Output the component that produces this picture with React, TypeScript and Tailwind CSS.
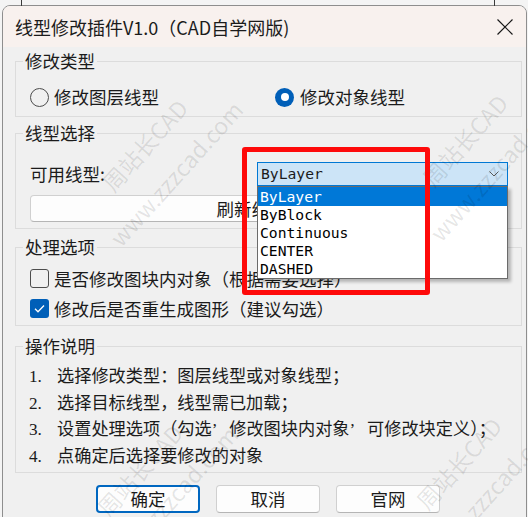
import React from "react";

const items = ["ByLayer", "ByBlock", "Continuous", "CENTER", "DASHED"];

const Q = () => <span className="inline-block w-[17.5px]">’</span>;

const steps: React.ReactNode[] = [
  "选择修改类型：图层线型或对象线型；",
  "选择目标线型，线型需已加载；",
  <>
    设置处理选项（勾选<Q />修改图块内对象<Q />可修改块定义）；
  </>,
  "点确定后选择要修改的对象",
];

function Group({ title, className, children }: { title: string; className: string; children: React.ReactNode }) {
  return (
    <fieldset className={"ml-[12px] w-[507px] border border-[#dcdcdc] " + className}>
      <legend className="ml-[7px] px-[2px] text-[17.5px] leading-[18px]">{title}</legend>
      {children}
    </fieldset>
  );
}

function Mark({ className }: { className: string }) {
  return (
    <div
      className={
        "pointer-events-none absolute w-[200px] h-[68px] -rotate-[48deg] flex flex-col items-center gap-[16px] text-[23px] leading-[26px] text-black/10 whitespace-nowrap " +
        className
      }
    >
      <span>周站长CAD</span>
      <span>www.zzzcad.com</span>
    </div>
  );
}

export default function App() {
  return (
    <div className="relative w-[528px] h-[517px] overflow-hidden bg-[#f4f4f4] font-['Noto_Sans_CJK_SC',sans-serif] text-[#1b1b1b]">
      <div className="absolute left-[21px] top-0 w-px h-[6px] bg-[#3a3a3a]" />
      <div className="absolute left-[494px] top-0 w-px h-[6px] bg-[#3a3a3a]" />

      <div className="pt-[5px] pl-[2px]">
        <div className="w-[525px] h-[530px] border border-[#8e8e8e] rounded-t-[8px] bg-[#f0f0f0] overflow-hidden">
          {/* title bar */}
          <div className="h-[41px] bg-[#f8f1ee] flex items-center pl-[12px] pr-[13px]">
            <span className="text-[18px] leading-[24px]">线型修改插件V1.0（CAD自学网版)</span>
            <svg className="ml-auto" width="16" height="16" viewBox="0 0 16 16">
              <path d="M0.5 0.5L15.5 15.5M15.5 0.5L0.5 15.5" stroke="#1a1a1a" strokeWidth="1.2" fill="none" />
            </svg>
          </div>

          <Group title="修改类型" className="mt-[5px] h-[65px]">
            <div className="flex items-center pl-[14px] pt-[17px] text-[17.5px] leading-[20px]">
              <label className="flex items-center gap-[5px] w-[245px]">
                <span className="w-[19px] h-[19px] rounded-full border border-[#4d4d4d]" />
                <span>修改图层线型</span>
              </label>
              <label className="flex items-center gap-[6px]">
                <span className="w-[19px] h-[19px] rounded-full bg-[#005fb8] flex items-center justify-center">
                  <span className="w-[8px] h-[8px] rounded-full bg-white" />
                </span>
                <span>修改对象线型</span>
              </label>
            </div>
          </Group>

          <Group title="线型选择" className="mt-[7px] h-[105px]">
            <div className="pl-[14px] pr-[13px] pt-[20px] text-[17.5px]">
              <div className="flex items-center h-[24px]">
                <span className="leading-[20px]">可用线型:</span>
                <div className="relative ml-auto w-[251px] h-[24px] border border-[#0078d4] bg-[#cce4f7] flex items-center pl-[3px] pr-[8px] font-['DejaVu_Sans_Mono',monospace] text-[14.7px]">
                  <span>ByLayer</span>
                  <svg className="ml-auto" width="10" height="6" viewBox="0 0 10 6">
                    <path d="M0.5 0.5L5 5L9.5 0.5" stroke="#5a5a5a" strokeWidth="1" fill="none" />
                  </svg>
                  <ul className="absolute left-[-1px] top-[23px] w-[251px] border border-[#6b6b6b] bg-white shadow-[3px_3px_3px_rgba(0,0,0,0.25)] z-10 leading-[18px]">
                    {items.map((it, i) => (
                      <li
                        key={it}
                        className={i === 0 ? "h-[19px] pl-[2px] pt-[1px] bg-[#0078d7] text-white" : "h-[18px] pl-[2px] text-black"}
                      >
                        {it}
                      </li>
                    ))}
                  </ul>
                </div>
              </div>
              <button className="mt-[9px] w-full h-[27px] rounded-[4px] border border-[#d0d0d0] border-b-[#b5b5b5] bg-[#fdfdfd] leading-[20px]">
                刷新线型列表
              </button>
            </div>
          </Group>

          <Group title="处理选项" className="mt-[9px] h-[88px]">
            <div className="pl-[14px] pt-[13px] flex flex-col gap-[11px] text-[17.5px] leading-[20px]">
              <label className="flex items-center gap-[5px] h-[19px]">
                <span className="w-[19px] h-[19px] rounded-[3px] border border-[#4d4d4d]" />
                <span>是否修改图块内对象（根据需要选择）</span>
              </label>
              <label className="flex items-center gap-[5px] h-[19px]">
                <span className="w-[19px] h-[19px] rounded-[3px] bg-[#005fb8] flex items-center justify-center">
                  <svg width="19" height="19" viewBox="0 0 19 19">
                    <path d="M5 9.8L8 12.8L14 6.5" stroke="#fff" strokeWidth="1.3" fill="none" />
                  </svg>
                </span>
                <span>修改后是否重生成图形（建议勾选）</span>
              </label>
            </div>
          </Group>

          <Group title="操作说明" className="mt-[11px] h-[136px]">
            <ol className="pl-[13px] pt-[9px] font-['Liberation_Serif','Noto_Sans_CJK_SC',serif] text-[17.2px] leading-[26.67px]">
              {steps.map((s, i) => (
                <li key={i} className="flex">
                  <span className="w-[28px]">{i + 1}.</span>
                  <span>{s}</span>
                </li>
              ))}
            </ol>
          </Group>

          <div className="mt-[12px] ml-[93px] flex gap-[16px] text-[17.5px] leading-[20px]">
            <button className="w-[104px] h-[28px] rounded-[4px] border-2 border-[#0067c0] bg-[#fdfdfd]">确定</button>
            <button className="w-[104px] h-[28px] rounded-[4px] border border-[#d0d0d0] border-b-[#b5b5b5] bg-[#fdfdfd]">取消</button>
            <button className="w-[104px] h-[28px] rounded-[4px] border border-[#d0d0d0] border-b-[#b5b5b5] bg-[#fdfdfd]">官网</button>
          </div>
        </div>
      </div>

      <Mark className="left-[60px] top-[125px] z-20" />
      <Mark className="left-[380px] top-[120px] z-20" />
      <Mark className="left-[55px] top-[450px] z-20" />
      <Mark className="left-[374px] top-[443px] z-20" />

      <div className="pointer-events-none absolute left-[242px] top-[147px] w-[188px] h-[148px] border-[5px] border-[#fe0a0a] rounded-[3px] z-30" />
    </div>
  );
}
